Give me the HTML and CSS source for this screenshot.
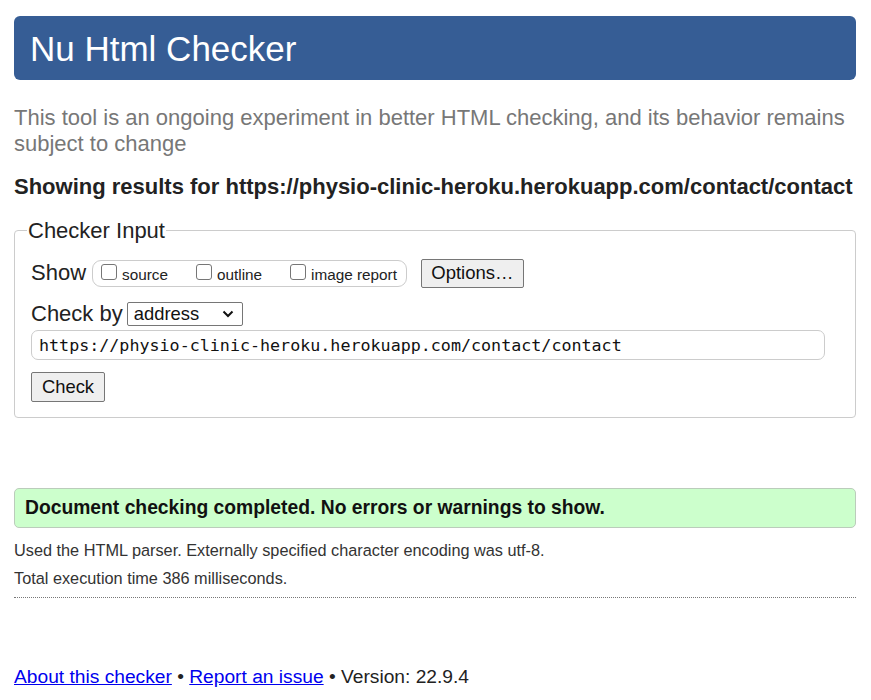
FILE: index.html
```html
<!DOCTYPE html>
<html lang="en">
<head>
<meta charset="utf-8">
<title>Nu Html Checker</title>
<link rel="stylesheet" href="styles.css">
</head>
<body>
<div class="page">
  <h1 class="banner">Nu Html Checker</h1>
  <p class="intro">This tool is an ongoing experiment in better HTML checking, and its behavior remains subject to change</p>
  <p class="showing">Showing results for https://physio-clinic-heroku.herokuapp.com/contact/contact</p>
  <fieldset class="input-box">
    <legend class="legend">Checker Input</legend>
    <div class="row">
      <span class="row-label">Show</span>
      <span class="pill">
        <label class="opt"><span class="cb"></span>source</label>
        <label class="opt"><span class="cb"></span>outline</label>
        <label class="opt"><span class="cb"></span>image report</label>
      </span>
      <span class="btn btn-options">Options…</span>
    </div>
    <div class="row row-by">
      <span class="row-label">Check by</span>
      <span class="select">address<svg class="chev" width="12" height="8" viewBox="0 0 12 8"><path d="M1.5 1.5 L6 6 L10.5 1.5" fill="none" stroke="#111" stroke-width="2"/></svg></span>
    </div>
    <div class="url">https://physio-clinic-heroku.herokuapp.com/contact/contact</div>
    <div class="row-check"><span class="btn btn-check">Check</span></div>
  </fieldset>
  <div class="success">Document checking completed. No errors or warnings to show.</div>
  <p class="detail first">Used the HTML parser. Externally specified character encoding was utf-8.</p>
  <p class="detail">Total execution time 386 milliseconds.</p>
  <hr class="sep">
  <p class="footer"><a href="#">About this checker</a> • <a href="#">Report an issue</a> • Version: 22.9.4</p>
</div>
</body>
</html>
```
FILE: styles.css
```css
html, body {
  margin: 0;
  padding: 0;
  background: #fff;
}
body {
  font-family: "Liberation Sans", Arial, sans-serif;
  color: #222;
}
.page {
  padding: 16px 15px 0 14px;
}
.banner {
  margin: 0;
  height: 64px;
  line-height: 66px;
  background: #365d95;
  color: #fff;
  font-weight: normal;
  font-size: 35px;
  padding-left: 16px;
  border-radius: 6px;
}
.intro {
  margin: 25px 0 0;
  font-size: 22px;
  line-height: 26px;
  color: #777;
}
.showing {
  margin: 17px 0 0;
  font-size: 22px;
  line-height: 26px;
  font-weight: bold;
  color: #222;
}
.input-box {
  margin: 18px 0 0;
  border: 1px solid #ccc;
  border-radius: 4px;
  padding: 15px 16px 15px 16px;
}
.legend {
  font-size: 22px;
  line-height: 25px;
  padding: 0 1px;
  margin-left: -4px;
  color: #222;
}
.row {
  display: flex;
  align-items: center;
  height: 30px;
}
.row-label {
  font-size: 22px;
  margin-right: 6px;
}
.pill {
  display: flex;
  align-items: center;
  box-sizing: border-box;
  height: 27px;
  border: 1px solid #ccc;
  border-radius: 9px;
  padding: 0 9px 0 8px;
  gap: 28px;
}
.opt {
  display: flex;
  align-items: center;
  font-size: 15.3px;
  color: #222;
  padding-top: 3px;
}
.cb {
  box-sizing: border-box;
  width: 16px;
  height: 16px;
  border: 1px solid #767676;
  border-radius: 3px;
  margin-right: 5px;
  margin-top: -6px;
  background: #fff;
}
.btn {
  display: inline-flex;
  align-items: center;
  justify-content: center;
  background: #efefef;
  border: 1px solid #767676;
  border-radius: 2px;
  color: #111;
  font-size: 18.5px;
  box-sizing: border-box;
}
.btn-options {
  margin-left: 14px;
  width: 103px;
  height: 29px;
}
.row-by {
  margin-top: 12px;
  height: 28px;
}
.row-by .row-label {
  margin-right: 4px;
}
.select {
  display: inline-flex;
  align-items: center;
  justify-content: space-between;
  box-sizing: border-box;
  width: 116px;
  height: 24px;
  border: 1px solid #767676;
  border-radius: 2px;
  padding: 0 8px 0 6px;
  font-size: 18.4px;
  color: #111;
}
.chev {
  display: block;
}
.url {
  margin-top: 2px;
  box-sizing: border-box;
  height: 30px;
  width: 794px;
  border: 1px solid #ccc;
  border-radius: 7px;
  padding: 0 7px;
  font-family: "DejaVu Sans Mono", "Liberation Mono", monospace;
  font-size: 16.7px;
  line-height: 28px;
  color: #111;
}
.row-check {
  margin-top: 12px;
  height: 30px;
}
.btn-check {
  width: 74px;
  height: 30px;
  font-size: 18.4px;
}
.success {
  margin-top: 70px;
  box-sizing: border-box;
  height: 40px;
  line-height: 38px;
  background: #ccffcc;
  border: 1px solid #bbccbb;
  border-radius: 5px;
  padding-left: 10px;
  font-size: 19.3px;
  font-weight: bold;
  color: #111;
}
.detail {
  margin: 0;
  font-size: 16.3px;
  line-height: 28px;
  color: #333;
}
.detail.first {
  margin-top: 8px;
}
.sep {
  margin: 5px 0 0;
  border: none;
  border-top: 1px dotted #777;
  height: 0;
}
.footer {
  margin: 66px 0 0;
  font-size: 19.2px;
  line-height: 26px;
  color: #222;
}
.footer a {
  color: #0000ee;
}
```
